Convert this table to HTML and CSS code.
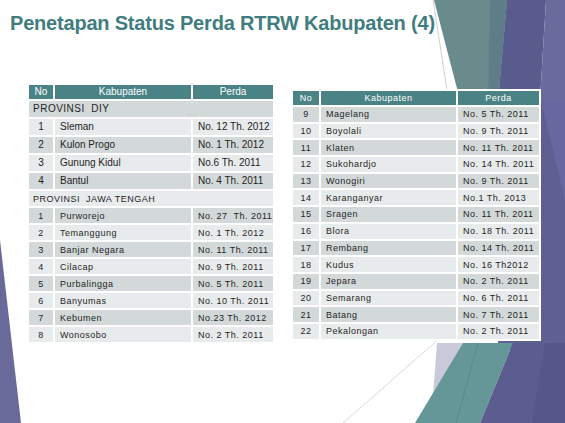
FILE: index.html
```html
<!DOCTYPE html>
<html lang="id">
<head>
    <meta charset="UTF-8">
    <title>Penetapan Status Perda RTRW Kabupaten (4)</title>
    <link rel="stylesheet" href="styles.css">
</head>
<body>
<div class="slide">
    <svg class="deco" viewBox="0 0 565 423" width="565" height="423">
        <!-- kanan atas -->
        <polygon points="434,0 507,0 498,100 460,100" fill="#6a8b8c"/>
        <polygon points="490,0 507,0 498,100 488,100" fill="#5f7d89"/>
        <polygon points="507,0 546,0 540,100 498,100" fill="#585b8c"/>
        <polygon points="546,0 565,0 565,100 540,100" fill="#6a6a9d"/>
        <line x1="433" y1="0" x2="447" y2="90" stroke="#c4c4c4" stroke-width="0.8"/>
        <!-- kanan tengah -->
        <rect x="498" y="100" width="67" height="250" fill="#5f5f92"/>
        <polygon points="541,100 565,100 565,200" fill="#6868a0"/>
        <!-- kanan bawah -->
        <line x1="440" y1="338" x2="343" y2="423" stroke="#cfcfcf" stroke-width="0.8"/>
        <polygon points="437,343 463,343 433,396" fill="#c9c9da"/>
        <polygon points="463,343 513,343 480,423 415,423" fill="#659799"/>
        <line x1="478" y1="343" x2="456" y2="423" stroke="#578a8c" stroke-width="1"/>
        <polygon points="513,343 565,343 565,423 480,423" fill="#5c5d8f"/>
        <polygon points="545,343 565,343 565,423 532,423" fill="#55578a"/>
        <!-- kiri bawah -->
        <polygon points="0,240 21,423 0,423" fill="#6a6a9a"/>
    </svg>

    <h1 class="title">Penetapan Status Perda RTRW Kabupaten (4)</h1>

    <div class="tables">
        <table class="data data-left">
            <colgroup>
                <col class="c-no"><col class="c-kab"><col class="c-perda">
            </colgroup>
            <tr class="head"><th>No</th><th>Kabupaten</th><th>Perda</th></tr>
            <tr class="dark tall"><td colspan="3" class="prov">PROVINSI&nbsp; DIY</td></tr>
            <tr class="light tall"><td class="no">1</td><td>Sleman</td><td>No. 12 Th. 2012</td></tr>
            <tr class="dark tall"><td class="no">2</td><td>Kulon Progo</td><td>No. 1 Th. 2012</td></tr>
            <tr class="light tall"><td class="no">3</td><td>Gunung Kidul</td><td>No.6 Th. 2011</td></tr>
            <tr class="dark tall"><td class="no">4</td><td>Bantul</td><td>No. 4 Th. 2011</td></tr>
            <tr class="light"><td colspan="3" class="prov small">PROVINSI&nbsp; JAWA TENGAH</td></tr>
            <tr class="dark small"><td class="no">1</td><td>Purworejo</td><td>No. 27 &nbsp;Th. 2011</td></tr>
            <tr class="light small"><td class="no">2</td><td>Temanggung</td><td>No. 1 Th. 2012</td></tr>
            <tr class="dark small"><td class="no">3</td><td>Banjar Negara</td><td>No. 11 Th. 2011</td></tr>
            <tr class="light small"><td class="no">4</td><td>Cilacap</td><td>No. 9 Th. 2011</td></tr>
            <tr class="dark small"><td class="no">5</td><td>Purbalingga</td><td>No. 5 Th. 2011</td></tr>
            <tr class="light small"><td class="no">6</td><td>Banyumas</td><td>No. 10 Th. 2011</td></tr>
            <tr class="dark small"><td class="no">7</td><td>Kebumen</td><td>No.23 Th. 2012</td></tr>
            <tr class="light small"><td class="no">8</td><td>Wonosobo</td><td>No. 2 Th. 2011</td></tr>
        </table>

        <table class="data data-right">
            <colgroup>
                <col class="c-no"><col class="c-kab"><col class="c-perda">
            </colgroup>
            <tr class="head small"><th>No</th><th>Kabupaten</th><th>Perda</th></tr>
            <tr class="dark small"><td class="no">9</td><td>Magelang</td><td>No. 5 Th. 2011</td></tr>
            <tr class="light small"><td class="no">10</td><td>Boyolali</td><td>No. 9 Th. 2011</td></tr>
            <tr class="dark small"><td class="no">11</td><td>Klaten</td><td>No. 11 Th. 2011</td></tr>
            <tr class="light small"><td class="no">12</td><td>Sukohardjo</td><td>No. 14 Th. 2011</td></tr>
            <tr class="dark small"><td class="no">13</td><td>Wonogiri</td><td>No. 9 Th. 2011</td></tr>
            <tr class="light small"><td class="no">14</td><td>Karanganyar</td><td>No.1 Th. 2013</td></tr>
            <tr class="dark small"><td class="no">15</td><td>Sragen</td><td>No. 11 Th. 2011</td></tr>
            <tr class="light small"><td class="no">16</td><td>Blora</td><td>No. 18 Th. 2011</td></tr>
            <tr class="dark small"><td class="no">17</td><td>Rembang</td><td>No. 14 Th. 2011</td></tr>
            <tr class="light small"><td class="no">18</td><td>Kudus</td><td>No. 16 Th2012</td></tr>
            <tr class="dark small"><td class="no">19</td><td>Jepara</td><td>No. 2 Th. 2011</td></tr>
            <tr class="light small"><td class="no">20</td><td>Semarang</td><td>No. 6 Th. 2011</td></tr>
            <tr class="dark small"><td class="no">21</td><td>Batang</td><td>No. 7 Th. 2011</td></tr>
            <tr class="light small"><td class="no">22</td><td>Pekalongan</td><td>No. 2 Th. 2011</td></tr>
        </table>
    </div>
</div>
</body>
</html>
```

FILE: styles.css
```css
* {
    margin: 0;
    padding: 0;
    box-sizing: border-box;
}

body {
    background: #fff;
    font-family: "Liberation Sans", Arial, sans-serif;
}

.slide {
    position: relative;
    width: 565px;
    height: 423px;
    overflow: hidden;
    background: #fff;
}

.deco {
    position: absolute;
    left: 0;
    top: 0;
}

.title {
    position: relative;
    display: inline-block;
    padding: 11px 0 0 10px;
    font-family: "Liberation Sans", Arial, sans-serif;
    font-size: 20px;
    line-height: 24px;
    font-weight: bold;
    letter-spacing: -0.2px;
    color: #417d7f;
    white-space: nowrap;
}

.tables {
    position: relative;
    display: flex;
    align-items: flex-start;
    gap: 16px;
    padding: 48px 0 0 27px;
}

.data {
    border-collapse: separate;
    border-spacing: 2px;
    background: #fff;
    color: #1e1e1e;
    font-size: 10px;
    letter-spacing: 0;
    table-layout: fixed;
}

.data-left {
    width: 248px;
}

.data-left .c-no { width: 24px; }
.data-left .c-kab { width: 136px; }
.data-left .c-perda { width: 80px; }

.data-right {
    width: 250px;
    margin-top: 6px;
}

.data-right .c-no { width: 26px; }
.data-right .c-kab { width: 135px; }
.data-right .c-perda { width: 81px; }

.data th, .data td {
    padding: 0 5px;
    white-space: nowrap;
    vertical-align: middle;
    text-align: left;
    font-weight: normal;
    line-height: 12px;
}

.data .head th {
    height: 14px;
    background: #4a8385;
    color: #fff;
    text-align: center;
}

.data td {
    height: 15px;
}

.data .tall td {
    height: 16px;
}

.data-right td {
    height: 14.7px;
}

.data .dark td {
    background: #d3d9d9;
}

.data .light td {
    background: #e8ebeb;
}

.data td.no {
    text-align: center;
    padding: 0;
}

.data td.prov {
    padding-left: 4px;
    letter-spacing: 0.5px;
}

.data .small td, .data .small th, .data td.small {
    font-size: 9px;
    letter-spacing: 0.5px;
}
```
